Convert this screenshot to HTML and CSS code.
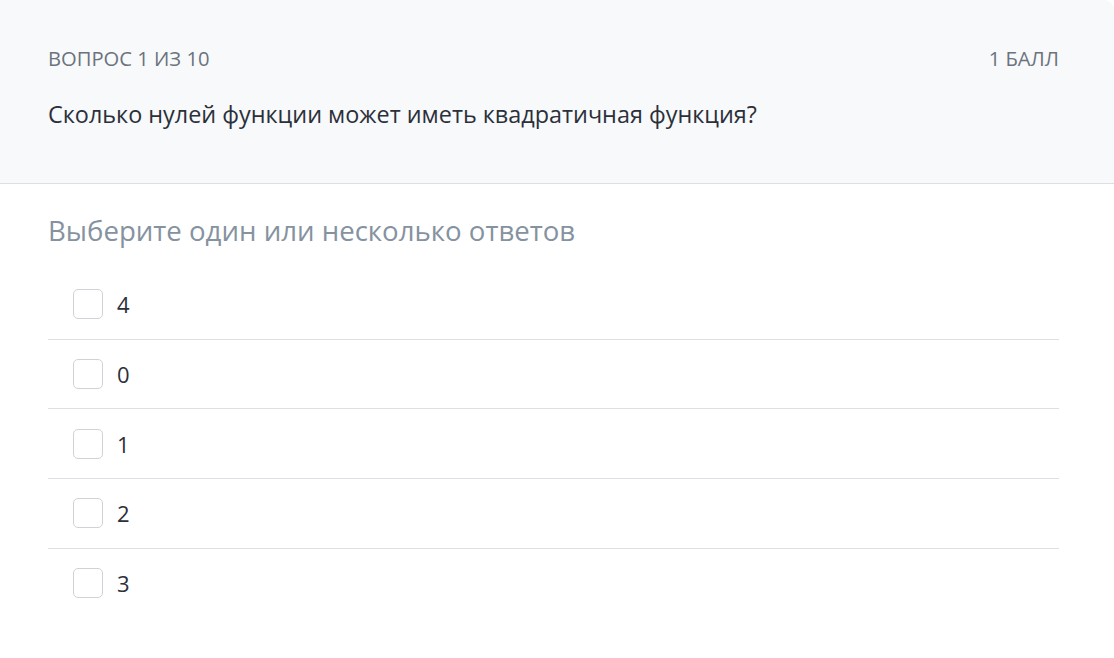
FILE: index.html
```html
<!DOCTYPE html>
<html lang="ru">

<head>
    <meta charset="UTF-8">
    <meta name="viewport" content="width=device-width, initial-scale=1.0">
    <title>Вопрос 1 из 10</title>
    <link rel="stylesheet" href="styles.css">
</head>

<body>

    <div class="card">
        <div class="card-header">
            <div class="meta">
                <span>Вопрос 1 из 10</span>
                <span>1 балл</span>
            </div>
            <p class="question">Сколько нулей функции может иметь квадратичная функция?</p>
        </div>

        <div class="card-body">
            <h3 class="hint">Выберите один или несколько ответов</h3>

            <ul class="answers">
                <li><label><input type="checkbox" name="answer" value="4"><span class="box"></span>4</label></li>
                <li><label><input type="checkbox" name="answer" value="0"><span class="box"></span>0</label></li>
                <li><label><input type="checkbox" name="answer" value="1"><span class="box"></span>1</label></li>
                <li><label><input type="checkbox" name="answer" value="2"><span class="box"></span>2</label></li>
                <li><label><input type="checkbox" name="answer" value="3"><span class="box"></span>3</label></li>
            </ul>
        </div>
    </div>

</body>

</html>
```

FILE: styles.css
```css
body {
    font-family: "Open Sans", Arial, sans-serif;
    margin: 0;
    padding: 0;
    background-color: #fff;
    color: #2b303a;
}

.card {
    border-top-right-radius: 10px;
    overflow: hidden;
}

.card-header {
    background-color: #f8f9fb;
    border-bottom: 1px solid #dcdfe3;
    padding: 45px 55px 0 48px;
    height: 138px;
}

.meta {
    display: flex;
    justify-content: space-between;
    font-size: 20.2px;
    line-height: 26px;
    color: #6b737d;
    text-transform: uppercase;
}

.question {
    margin: 28px 0 0;
    font-size: 23.4px;
    line-height: 30px;
}

.card-body {
    padding: 28px 55px 0 48px;
}

.hint {
    margin: 0 0 22px;
    font-size: 27.6px;
    line-height: 36px;
    font-weight: normal;
    color: #8592a0;
}

.answers {
    list-style: none;
    margin: 0;
    padding: 0;
}

.answers li {
    border-bottom: 1px solid #dcdfe3;
}

.answers li:last-child {
    border-bottom: none;
}

.answers label {
    display: flex;
    align-items: center;
    height: 68.7px;
    padding-left: 25px;
    font-size: 22px;
    cursor: pointer;
}

.answers input {
    display: none;
}

.box {
    width: 28px;
    height: 28px;
    border: 1px solid #cfd3d8;
    border-radius: 5px;
    margin-right: 14px;
    background-color: #fff;
}

.answers input:checked + .box {
    background-color: #4caf50;
    border-color: #4caf50;
}
```
